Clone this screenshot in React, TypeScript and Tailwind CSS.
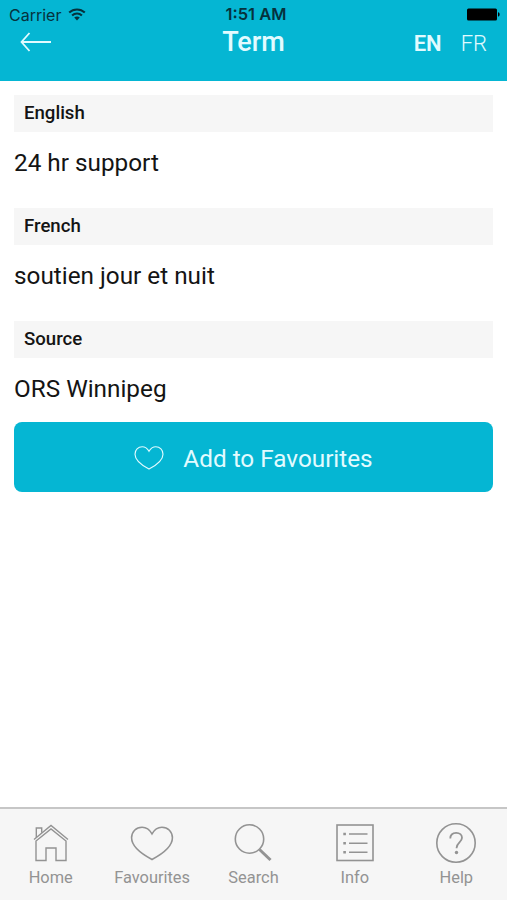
import React from 'react';

const BackIcon = () => (
  <svg width="32" height="20" viewBox="0 0 32 20" fill="none" stroke="currentColor" strokeWidth="1.8">
    <path d="M31 10H1.5M9.5 1L1.5 10l8 9" />
  </svg>
);

const WifiIcon = () => (
  <svg width="18" height="13" viewBox="0 0 18 13" fill="none" stroke="currentColor" strokeWidth="2.1">
    <path d="M1.2 4.6C5.6.4 12.4.4 16.8 4.6" />
    <path d="M4.1 7.5c2.8-2.6 7-2.6 9.8 0" />
    <path d="M9 12.4L6.2 9.6c1.6-1.5 4-1.5 5.6 0z" fill="currentColor" stroke="none" />
  </svg>
);

const BatteryIcon = () => (
  <svg width="33" height="13" viewBox="0 0 33 13" fill="currentColor">
    <rect x="0" y="0.5" width="30" height="12" rx="1.5" />
    <path d="M31 4.3c2.2.6 2.2 3.8 0 4.4z" />
  </svg>
);

const HeartIcon: React.FC<{ className: string; strokeWidth: number }> = ({ className, strokeWidth }) => (
  <svg className={className} viewBox="0 0 44 36" fill="none" stroke="currentColor" strokeWidth={strokeWidth}>
    <path d="M22 8C19.5 3.5 16 1.2 11.8 1.2C5.6 1.2 1 6 1 12.2C1 22.5 12.5 29.5 22 34.5C31.5 29.5 43 22.5 43 12.2C43 6 38.4 1.2 32.2 1.2C28 1.2 24.5 3.5 22 8Z" />
  </svg>
);

const HomeIcon = () => (
  <svg width="38" height="40" viewBox="0 0 38 40" fill="none" stroke="currentColor" strokeWidth="1.4">
    <path d="M2 16.5L19 2.5l17 14" />
    <path d="M4 18L19 6l15 12v19.5H24V25H14v12.5H4z" />
    <path d="M4.3 14.5V5h5.4v4.8" />
  </svg>
);

const SearchIcon = () => (
  <svg width="38" height="40" viewBox="0 0 38 40" fill="none" stroke="currentColor">
    <circle cx="15.5" cy="16" r="14.2" strokeWidth="1.6" />
    <path d="M25.5 26.5L36.5 37" strokeWidth="3" />
  </svg>
);

const InfoIcon = () => (
  <svg width="38" height="40" viewBox="0 0 38 40" fill="none" stroke="currentColor" strokeWidth="1.6">
    <rect x="1" y="2" width="36" height="35.5" />
    <path d="M13 11h18.5M13 20.2h18.5M13 29.2h18.5" />
    <path d="M7.3 11h2.6M7.3 20.2h2.6M7.3 29.2h2.6" strokeWidth="2.6" />
  </svg>
);

const HelpIcon = () => (
  <svg width="40" height="40" viewBox="0 0 40 40" fill="none" stroke="currentColor" strokeWidth="1.6">
    <circle cx="20" cy="20" r="19.2" />
    <path d="M14.3 15.5C14.3 11.8 16.7 9.8 20.2 9.8c3.5 0 5.8 2.1 5.8 5 0 4.3-5.4 4.8-5.4 9.9v.6" strokeWidth="1.8" />
    <circle cx="20.5" cy="29.5" r="1.7" fill="currentColor" stroke="none" />
  </svg>
);

const entries = [
  { label: 'English', value: '24 hr support' },
  { label: 'French', value: 'soutien jour et nuit' },
  { label: 'Source', value: 'ORS Winnipeg' },
];

const tabs = [
  { name: 'Home', icon: <HomeIcon /> },
  { name: 'Favourites', icon: <HeartIcon className="w-[44px] h-[35px]" strokeWidth={1.6} /> },
  { name: 'Search', icon: <SearchIcon /> },
  { name: 'Info', icon: <InfoIcon /> },
  { name: 'Help', icon: <HelpIcon /> },
];

const App: React.FC = () => {
  return (
    <div className="flex h-screen flex-col bg-white font-[Roboto,sans-serif] text-[#141414]">
      <header className="h-[81px] shrink-0 bg-[#05b6d3]">
        <div className="grid h-7 grid-cols-3 items-center pl-[9px] pr-[7px] font-[Inter,sans-serif] text-[#06323d]">
          <div className="flex items-center gap-[7px] pt-px">
            <span className="text-[16px] leading-5">Carrier</span>
            <WifiIcon />
          </div>
          <span className="pl-[3px] text-center text-[16.5px] leading-5 font-semibold whitespace-nowrap">1:51 AM</span>
          <div className="flex justify-end pt-[1px] text-black">
            <BatteryIcon />
          </div>
        </div>
        <div className="grid h-7 grid-cols-3 items-center pr-5 pl-5 text-[#e2fbff]">
          <BackIcon />
          <h1 className="text-center text-[27px] leading-7 font-medium">Term</h1>
          <div className="flex h-7 justify-end gap-[19px] text-[22px] leading-[31px]">
            <span className="font-semibold">EN</span>
            <span className="font-light">FR</span>
          </div>
        </div>
      </header>

      <main className="flex-1 px-[14px] pt-[14px]">
        {entries.map(entry => (
          <section key={entry.label} className="h-[113.2px]">
            <h2 className="h-[37px] bg-[#f6f6f6] px-[10px] text-[18.6px] leading-[37px] font-medium">{entry.label}</h2>
            <p className="pt-[14px] text-[24.3px] leading-[34px]">{entry.value}</p>
          </section>
        ))}
        <button className="-mt-[13px] flex h-[70px] w-full items-center justify-center gap-[19px] rounded-lg bg-[#05b6d3] pt-[6px] text-[24.3px] text-[#e2fbff]">
          <HeartIcon className="-mt-[3px] h-[24px] w-[30px]" strokeWidth={1.7} />
          <span>Add to Favourites</span>
        </button>
      </main>

      <nav className="grid h-[93px] shrink-0 grid-cols-5 border-t-2 border-[#c6c6c6] bg-[#f6f6f6] text-[#939393]">
        {tabs.map(tab => (
          <div key={tab.name} className="flex flex-col items-center pt-[14px]">
            <div className="flex h-10 items-center">{tab.icon}</div>
            <span className="mt-[3px] text-[16.4px] leading-6">{tab.name}</span>
          </div>
        ))}
      </nav>
    </div>
  );
};

export default App;
